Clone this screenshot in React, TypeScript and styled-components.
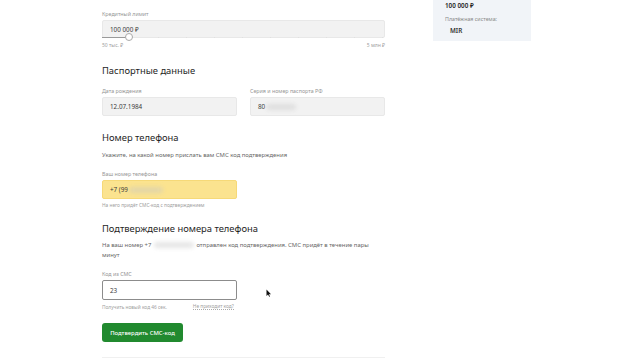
import React from "react";
import styled, { createGlobalStyle } from "styled-components";

const Global = createGlobalStyle`
  html, body { margin: 0; padding: 0; background: #ffffff; }
  body { font-family: "Noto Sans", "Open Sans", sans-serif; color: #222; overflow: hidden; }
  * { box-sizing: border-box; }
`;

const Page = styled.div`
  position: relative;
  width: 640px;
  height: 360px;
  display: flex;
  align-items: flex-start;
`;

const Main = styled.div`
  margin-left: 102px;
  width: 283px;
  padding-top: 11px;
  display: flex;
  flex-direction: column;
  height: 358px;
  border-bottom: 1px solid #f0f0f0;
`;

const Side = styled.aside`
  margin-left: 48px;
  width: 98px;
  height: 41px;
  background: #f1f4f8;
  padding: 2px 0 0 12px;
  display: flex;
  flex-direction: column;
`;

const SideAmount = styled.div`
  font-size: 6.3px;
  line-height: 8px;
  font-weight: 600;
  color: #222;
`;

const SideLabel = styled.div`
  margin-top: 6px;
  font-size: 5.3px;
  line-height: 6px;
  color: #8a8a8a;
`;

const SideMir = styled.div`
  margin-top: 5px;
  margin-left: 5px;
  font-size: 6.3px;
  line-height: 8px;
  font-weight: 600;
  color: #333;
`;

const Label = styled.div<{ $mt?: number }>`
  margin-top: ${(p) => p.$mt ?? 0}px;
  font-size: 5.3px;
  line-height: 6px;
  color: #959595;
  white-space: nowrap;
`;

const Field = styled.div<{ $variant?: "grey" | "yellow" | "white"; $h?: number }>`
  position: relative;
  margin-top: 3px;
  height: ${(p) => p.$h ?? 19}px;
  display: flex;
  align-items: center;
  padding: 0 7px;
  font-size: 6.3px;
  color: #3a3a3a;
  border-radius: 2px;
  background: ${(p) =>
    p.$variant === "yellow" ? "#fbe38f" : p.$variant === "white" ? "#ffffff" : "#f2f2f2"};
  border: 1px solid
    ${(p) =>
      p.$variant === "yellow" ? "#f6d978" : p.$variant === "white" ? "#8c8c8c" : "#e8e8e8"};
`;

const Track = styled.div`
  position: absolute;
  left: -1px;
  right: -1px;
  bottom: -1px;
  height: 1px;
  background: repeating-linear-gradient(
    90deg,
    #e0e0e0 0 1px,
    transparent 1px 28px
  );
`;

const TrackFill = styled.div`
  position: absolute;
  left: 0;
  bottom: 0;
  height: 1px;
  background: #9a9a9a;
`;

const Thumb = styled.div`
  position: absolute;
  bottom: -4px;
  width: 8px;
  height: 8px;
  margin-left: -4px;
  border-radius: 50%;
  background: #fff;
  border: 1px solid #a9a9a9;
`;

const RangeRow = styled.div`
  margin-top: 4px;
  display: flex;
  justify-content: space-between;
  font-size: 5px;
  line-height: 6px;
  color: #a0a0a0;
`;

const Heading = styled.h2<{ $mt: number }>`
  margin: ${(p) => p.$mt}px 0 0;
  font-size: 9.4px;
  line-height: 14px;
  font-weight: 400;
  color: #1f1f1f;
`;

const TwoCols = styled.div`
  margin-top: 10px;
  display: grid;
  grid-template-columns: 135px 135px;
  column-gap: 13px;
`;

const Col = styled.div`
  display: flex;
  flex-direction: column;
`;

const HalfCol = styled.div`
  width: 135px;
  display: flex;
  flex-direction: column;
`;

const Desc = styled.p<{ $mt: number }>`
  margin: ${(p) => p.$mt}px 0 0;
  font-size: 5.9px;
  line-height: 10px;
  color: #666;
`;

const Hint = styled.div<{ $mt: number }>`
  margin-top: ${(p) => p.$mt}px;
  display: flex;
  gap: 26px;
  font-size: 4.8px;
  line-height: 6px;
  color: #a0a0a0;
  white-space: nowrap;
`;

const DottedLink = styled.span`
  border-bottom: 1px dotted #aaa;
  line-height: 5px;
`;

const Blur = styled.span<{ $w: number }>`
  display: inline-block;
  width: ${(p) => p.$w}px;
  height: 6px;
  margin: 0 1px;
  vertical-align: middle;
  border-radius: 3px;
  background: rgba(200, 200, 200, 0.45);
  filter: blur(2px);
`;

const Button = styled.button`
  margin-top: 13px;
  align-self: flex-start;
  width: 81px;
  height: 19px;
  border: none;
  border-radius: 3px;
  background: #218a2f;
  color: #ffffff;
  font-family: inherit;
  font-size: 5.9px;
  font-weight: 500;
  padding: 0;
`;

const Cursor = styled.svg`
  position: absolute;
  left: 266px;
  top: 289px;
`;

export default function App() {
  return (
    <>
      <Global />
      <Page>
        <Main>
          <Label>Кредитный лимит</Label>
          <Field $h={18}>
            100 000 ₽
            <Track>
              <TrackFill style={{ width: "26px" }} />
            </Track>
            <Thumb style={{ left: "26px" }} />
          </Field>
          <RangeRow>
            <span>50 тыс. ₽</span>
            <span>5 млн ₽</span>
          </RangeRow>

          <Heading $mt={16}>Паспортные данные</Heading>
          <TwoCols>
            <Col>
              <Label>Дата рождения</Label>
              <Field>12.07.1984</Field>
            </Col>
            <Col>
              <Label>Серия и номер паспорта РФ</Label>
              <Field>
                80<Blur $w={30} />
              </Field>
            </Col>
          </TwoCols>

          <Heading $mt={15}>Номер телефона</Heading>
          <Desc $mt={5}>Укажите, на какой номер прислать вам СМС код подтверждения</Desc>
          <HalfCol>
            <Label $mt={11}>Ваш номер телефона</Label>
            <Field $variant="yellow">
              +7 (99<Blur $w={34} />
            </Field>
          </HalfCol>
          <Hint $mt={3}>На него придёт СМС-код с подтверждением</Hint>

          <Heading $mt={14}>Подтверждение номера телефона</Heading>
          <Desc $mt={4}>
            На ваш номер +7 <Blur $w={40} /> отправлен код подтверждения. СМС придёт в течение пары
            минут
          </Desc>
          <HalfCol>
            <Label $mt={11}>Код из СМС</Label>
            <Field $variant="white" $h={20}>
              23
            </Field>
          </HalfCol>
          <Hint $mt={4}>
            <span>Получить новый код 46 сек.</span>
            <DottedLink>Не приходит код?</DottedLink>
          </Hint>
          <Button>Подтвердить СМС-код</Button>
        </Main>
        <Side>
          <SideAmount>100 000 ₽</SideAmount>
          <SideLabel>Платёжная система:</SideLabel>
          <SideMir>MIR</SideMir>
        </Side>
        <Cursor width="6" height="8" viewBox="0 0 6 8">
          <path d="M0.5 0.5 L0.5 7 L2 5.5 L3.2 7.8 L4 7.4 L2.9 5.2 L5 5.2 Z" fill="#111" />
        </Cursor>
      </Page>
    </>
  );
}
